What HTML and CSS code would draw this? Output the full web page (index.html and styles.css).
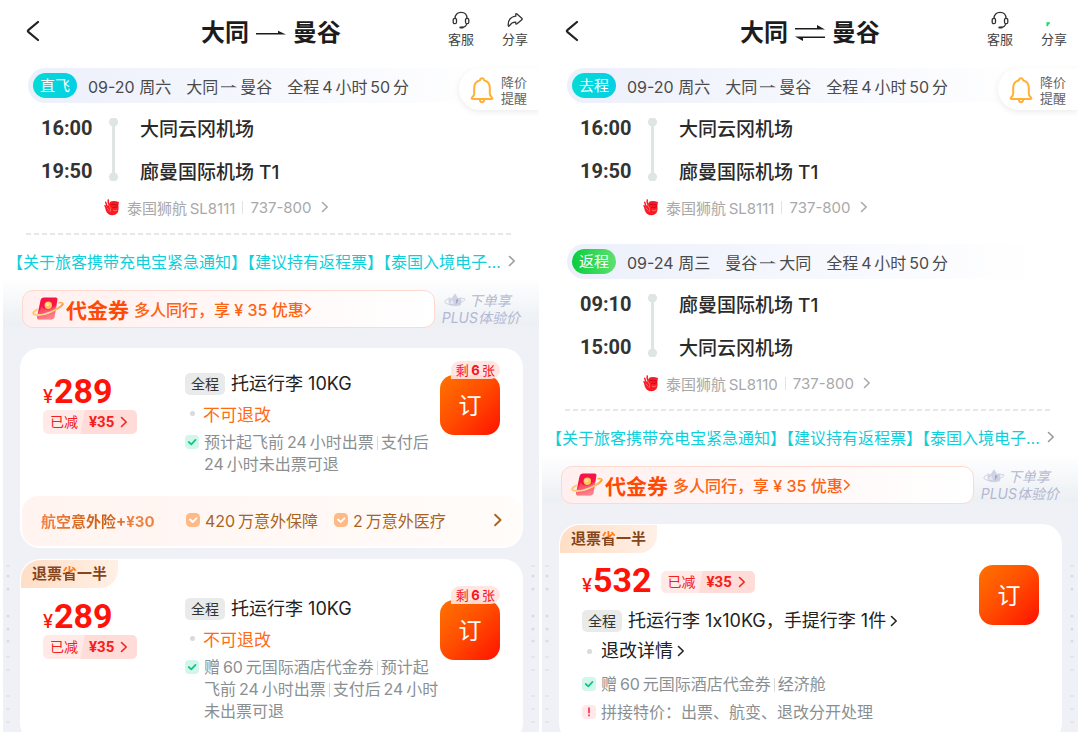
FILE: index.html
```html
<!DOCTYPE html>
<html lang="zh-CN">
<head>
<meta charset="utf-8">
<meta name="viewport" content="width=device-width, initial-scale=1">
<title>大同 — 曼谷 机票</title>
<link rel="stylesheet" href="styles.css">
</head>
<body>
<svg class="defs" width="0" height="0" aria-hidden="true">
  <defs>
    <linearGradient id="packet" x1="0" y1="0" x2="0.3" y2="1">
      <stop offset="0" stop-color="#f5124a"/><stop offset=".55" stop-color="#f51846"/><stop offset="1" stop-color="#ff8e94"/>
    </linearGradient>
    <linearGradient id="orbit" x1="0" y1="0" x2="1" y2="0">
      <stop offset="0" stop-color="#ffc46b"/><stop offset=".5" stop-color="#ffe0a8"/><stop offset="1" stop-color="#ff9d3c"/>
    </linearGradient>
    <symbol id="i-back" viewBox="0 0 14 22"><path d="M12 2 2.300 10.200Q1.500 11 2.300 11.800L12 20" fill="none" stroke="#222" stroke-width="2.200" stroke-linecap="round" stroke-linejoin="round"/></symbol>
    <symbol id="i-chev" viewBox="0 0 8 12"><path d="M1.500 1.500 6.200 6 1.500 10.500" fill="none" stroke="currentColor" stroke-width="1.600" stroke-linecap="round" stroke-linejoin="round"/></symbol>
    <symbol id="i-service" viewBox="0 0 18 18"><g fill="none" stroke="#333" stroke-width="1.300" stroke-linecap="round"><path d="M3 7.500C3 3.500 5.500 1.400 9 1.400S15 3.500 15 7.500M14.800 12.600Q13.800 16.300 9.800 16.400"/><rect x="1.200" y="7.300" width="3.300" height="5.400" rx="1.500"/><rect x="13.500" y="7.300" width="3.300" height="5.400" rx="1.500"/></g><path d="M8.300 16.400h2.400" stroke="#333" stroke-width="2" stroke-linecap="round"/></symbol>
    <symbol id="i-share" viewBox="0 0 18 18"><path d="M9.800 3.600Q9.800 2 11 3L15.800 7.200Q16.600 8 15.800 8.700L11 12.800Q9.800 13.700 9.800 12.200V11.200Q6.200 10.800 3.300 14.800Q2.300 15.900 2.200 14.200Q2 6.300 9.800 5.200Z" fill="none" stroke="#333" stroke-width="1.300" stroke-linejoin="round"/></symbol>
    <symbol id="i-bell" viewBox="0 0 24 28"><g fill="none" stroke="#ffb038" stroke-width="2" stroke-linejoin="round" stroke-linecap="round"><path d="M10 4.200Q10.200 2.200 12 2.200T14 4.200C18 5.200 19.800 8.300 19.800 12V17.500Q19.800 19.400 21.700 21.200Q23.200 23 21 23H3Q.8 23 2.300 21.200Q4.200 19.400 4.200 17.500V12C4.200 8.300 6 5.200 10 4.200Z"/><path d="M9.800 23.500Q10 26.200 12 26.200T14.200 23.500"/></g></symbol>
    <symbol id="i-lion" viewBox="0 0 16 17"><path d="M6 3Q9 1.200 15 3L14.400 6.200 14.600 10Q14.200 15.800 8.500 16.300Q3.500 16 1.800 11.500L1 8 4 7Z" fill="#fb1a22"/><g fill="none" stroke="#fb1a22" stroke-width="1.500" stroke-linecap="round"><path d="M4.200 .9Q3.600 4 5.800 7M1.700 3.200Q2 6.500 5 9M1 6.800Q2 9.500 5 11"/></g><path d="M4.600 6 6.600 9.500 6.200 13M3 8.600 5 11.500M9 11.300Q11.500 12.300 13.500 10.900" fill="none" stroke="#ffb5b5" stroke-width=".5"/><path d="M7 5.500Q10 4.700 14 6.200M8.400 8.500 13.700 7.900" fill="none" stroke="#b80712" stroke-width=".8"/></symbol>
    <symbol id="i-packet" viewBox="0 0 32 26"><path d="M26.500 6.800Q32 6 30.500 8.800Q26 14.500 13 16.800" fill="none" stroke="#ffae4d" stroke-width="1.600"/><path d="M11.500 1.500H23.500Q25.900 1.500 25.400 4L22.600 20.500Q22 23.500 19 23.500H7.500Q4.400 23.500 5.100 20.400L8.600 4Q9.200 1.500 11.500 1.500Z" fill="url(#packet)"/><path d="M9.500 10.500Q15 17.500 24.400 9.500L22.600 20.500Q22 23.500 19 23.500H7.500Q4.400 23.500 5.100 20.400Z" fill="#ff7180" opacity=".5"/><circle cx="16.300" cy="9.300" r="3.700" fill="#ffc65a"/><circle cx="15.500" cy="8.500" r="1.800" fill="#ffe4a0"/><path d="M5.500 13.300Q-.5 16.300 2 18.300Q9 20.800 22 14.500Q30 10.300 30.600 8.200" fill="none" stroke="url(#orbit)" stroke-width="1.900" stroke-linecap="round"/></symbol>
    <symbol id="i-crown" viewBox="0 0 22 16"><path d="M5 13 4.300 5.200 7.500 6.600 11 1.200 14 6 17.600 5.200 17 13Q11 15.500 5 13Z" fill="#d0d3e4"/><path d="M5.300 12.500 8 7.500 10.800 13.500Z" fill="#e6e8f2"/><path d="M12.500 7 11.700 12.800 14.500 8" fill="#9a9fbe"/><path d="M4 7Q-.5 8.700 1.500 11Q5 13.500 12.500 11.800Q21 9.500 21 7.200Q20.800 6 17.800 6.700" fill="none" stroke="#c5c8dc" stroke-width=".8"/></symbol>
    <symbol id="i-check" viewBox="0 0 14 14"><rect width="14" height="14" rx="4" fill="#d2f7ea"/><path d="M3.700 7 6.300 9.300 10.500 4.900" fill="none" stroke="#0cc489" stroke-width="1.700" stroke-linecap="round" stroke-linejoin="round"/></symbol>
    <symbol id="i-warn" viewBox="0 0 14 14"><rect width="14" height="14" rx="4" fill="#ffe8ea"/><path d="M7 3.200V7.600M7 10.200V10.600" stroke="#fb2f45" stroke-width="1.700" stroke-linecap="round"/></symbol>
    <symbol id="i-tick" viewBox="0 0 14 14"><rect width="14" height="14" rx="4.500" fill="#ffb987"/><path d="M4 6.500 6.700 9 10.400 5.300" fill="none" stroke="#fff" stroke-width="1.800" stroke-linecap="round" stroke-linejoin="round"/></symbol>
    <symbol id="i-to" viewBox="0 0 16 6"><path d="M0 4.300H16L10.800 1.800V3.200H0Z" fill="#555"/></symbol>
    <symbol id="i-marks" viewBox="0 0 4 180"><path d="M0 3h4M0 94h4M0 107h4M0 133h4M0 146h4M0 159h4M0 172h4" stroke="#d9dce2" stroke-width="1.200"/><g fill="#d9dce2"><circle cx="2" cy="13" r="1.600"/><circle cx="2" cy="26" r="1.600"/><circle cx="2" cy="53" r="1.600"/><circle cx="2" cy="66" r="1.600"/><circle cx="2" cy="78" r="1.600"/></g></symbol>
  </defs>
</svg>

<main class="screens">
  <section class="panel">
    <header class="top">
      <button class="back" aria-label="返回"><svg width="14" height="22"><use href="#i-back"/></svg></button>
      <h1 class="title">大同<svg width="30" height="8" viewBox="0 0 30 8"><path d="M0 5.600H30L22 1.800V4H0Z" fill="#1c1c1c"/></svg>曼谷</h1>
      <nav class="actions">
        <button class="action"><svg width="18" height="18"><use href="#i-service"/></svg>客服</button>
        <button class="action"><svg width="18" height="18"><use href="#i-share"/></svg>分享</button>
      </nav>
    </header>

    <article class="leg">
      <div class="band"><span class="pill">直飞</span><span>09-20 周六</span><span class="pair">大同<svg width="16" height="6"><use href="#i-to"/></svg>曼谷</span><span>全程&thinsp;4&thinsp;小时&thinsp;50&thinsp;分</span></div>
      <button class="remind"><svg width="24" height="28"><use href="#i-bell"/></svg><span>降价<br>提醒</span></button>
      <div class="stops">
        <time>16:00</time><i class="track"></i><strong>大同云冈机场</strong>
        <time>19:50</time><strong>廊曼国际机场 T1</strong>
      </div>
      <a class="plane" href="#"><svg width="16" height="17"><use href="#i-lion"/></svg><span>泰国狮航&thinsp;SL8111</span><i class="bar"></i><span>737-800</span><svg class="chev" width="8" height="12"><use href="#i-chev"/></svg></a>
    </article>
    <hr class="dash">
    <a class="notice" href="#"><span>【关于旅客携带充电宝紧急通知】【建议持有返程票】【泰国入境电子…</span><svg width="8" height="12"><use href="#i-chev"/></svg></a>

    <div class="offers">
      <div class="promo">
        <a class="coupon" href="#"><svg width="32" height="26"><use href="#i-packet"/></svg><b>代金券</b><span>多人同行，享 ¥ 35 优惠</span><svg width="8" height="12"><use href="#i-chev"/></svg></a>
        <a class="plus" href="#"><svg width="22" height="16"><use href="#i-crown"/></svg>下单享<br>PLUS体验价</a>
      </div>

      <article class="card">
        <div class="fare">
          <div class="price">
            <p class="amount"><small>¥</small>289</p>
            <button class="cut"><span>已减</span><b>¥35<svg width="8" height="12"><use href="#i-chev"/></svg></b></button>
          </div>
          <ul class="terms">
            <li class="lead"><span class="tag">全程</span>托运行李 10KG</li>
            <li class="strict"><i class="dot"></i>不可退改</li>
            <li class="fine"><svg width="14" height="14"><use href="#i-check"/></svg><span>预计起飞前&thinsp;24&thinsp;小时出票<i class="sep"></i>支付后<br>24&thinsp;小时未出票可退</span></li>
          </ul>
          <div class="buy"><button class="book">订</button><span class="left">剩&thinsp;<b>6</b>&thinsp;张</span></div>
        </div>
        <a class="insure" href="#"><strong>航空意外险+¥30</strong><span><svg width="14" height="14"><use href="#i-tick"/></svg>420&thinsp;万意外保障</span><span><svg width="14" height="14"><use href="#i-tick"/></svg>2&thinsp;万意外医疗</span><svg class="end" width="10" height="14"><use href="#i-chev"/></svg></a>
      </article>

      <article class="card">
        <h2 class="ribbon">退票<em>省</em>一半</h2>
        <div class="fare ribboned">
          <div class="price">
            <p class="amount"><small>¥</small>289</p>
            <button class="cut"><span>已减</span><b>¥35<svg width="8" height="12"><use href="#i-chev"/></svg></b></button>
          </div>
          <ul class="terms">
            <li class="lead"><span class="tag">全程</span>托运行李 10KG</li>
            <li class="strict"><i class="dot"></i>不可退改</li>
            <li class="fine"><svg width="14" height="14"><use href="#i-check"/></svg><span>赠&thinsp;60&thinsp;元国际酒店代金券<i class="sep"></i>预计起<br>飞前&thinsp;24&thinsp;小时出票<i class="sep"></i>支付后&thinsp;24&thinsp;小时<br>未出票可退</span></li>
          </ul>
          <div class="buy"><button class="book">订</button><span class="left">剩&thinsp;<b>6</b>&thinsp;张</span></div>
        </div>
      </article>
      <svg class="marks start" width="4" height="180"><use href="#i-marks"/></svg>
      <svg class="marks finish" width="4" height="180"><use href="#i-marks"/></svg>
    </div>
  </section>

  <section class="panel">
    <header class="top">
      <button class="back" aria-label="返回"><svg width="14" height="22"><use href="#i-back"/></svg></button>
      <h1 class="title">大同<svg width="30" height="18" viewBox="0 0 30 18"><path d="M0 5.600H30L22 1V4H0ZM30 12.400H0L8 17V14H30Z" fill="#1c1c1c"/></svg>曼谷</h1>
      <nav class="actions">
        <button class="action"><svg width="18" height="18"><use href="#i-service"/></svg>客服</button>
        <button class="action"><svg width="18" height="18" viewBox="0 0 18 18"><path d="M1.500 11.200H5.200L4.600 12.800Q3.400 13.200 2.900 15.200H1.500Z" fill="#12dc6c"/></svg>分享</button>
      </nav>
    </header>

    <article class="leg">
      <div class="band"><span class="pill">去程</span><span>09-20 周六</span><span class="pair">大同<svg width="16" height="6"><use href="#i-to"/></svg>曼谷</span><span>全程&thinsp;4&thinsp;小时&thinsp;50&thinsp;分</span></div>
      <button class="remind"><svg width="24" height="28"><use href="#i-bell"/></svg><span>降价<br>提醒</span></button>
      <div class="stops">
        <time>16:00</time><i class="track"></i><strong>大同云冈机场</strong>
        <time>19:50</time><strong>廊曼国际机场 T1</strong>
      </div>
      <a class="plane" href="#"><svg width="16" height="17"><use href="#i-lion"/></svg><span>泰国狮航&thinsp;SL8111</span><i class="bar"></i><span>737-800</span><svg class="chev" width="8" height="12"><use href="#i-chev"/></svg></a>
    </article>
    <article class="leg back-leg">
      <div class="band"><span class="pill green">返程</span><span>09-24 周三</span><span class="pair">曼谷<svg width="16" height="6"><use href="#i-to"/></svg>大同</span><span>全程&thinsp;4&thinsp;小时&thinsp;50&thinsp;分</span></div>
      <div class="stops">
        <time>09:10</time><i class="track"></i><strong>廊曼国际机场 T1</strong>
        <time>15:00</time><strong>大同云冈机场</strong>
      </div>
      <a class="plane" href="#"><svg width="16" height="17"><use href="#i-lion"/></svg><span>泰国狮航&thinsp;SL8110</span><i class="bar"></i><span>737-800</span><svg class="chev" width="8" height="12"><use href="#i-chev"/></svg></a>
    </article>
    <hr class="dash">
    <a class="notice" href="#"><span>【关于旅客携带充电宝紧急通知】【建议持有返程票】【泰国入境电子…</span><svg width="8" height="12"><use href="#i-chev"/></svg></a>

    <div class="offers">
      <div class="promo">
        <a class="coupon" href="#"><svg width="32" height="26"><use href="#i-packet"/></svg><b>代金券</b><span>多人同行，享 ¥ 35 优惠</span><svg width="8" height="12"><use href="#i-chev"/></svg></a>
        <a class="plus" href="#"><svg width="22" height="16"><use href="#i-crown"/></svg>下单享<br>PLUS体验价</a>
      </div>

      <article class="card">
        <h2 class="ribbon">退票<em>省</em>一半</h2>
        <div class="fare wide">
          <div class="summary">
            <div class="price inline">
              <p class="amount"><small>¥</small>532</p>
              <button class="cut"><span>已减</span><b>¥35<svg width="8" height="12"><use href="#i-chev"/></svg></b></button>
            </div>
            <ul class="terms roomy">
              <li class="lead"><span class="tag">全程</span>托运行李 1x10KG，手提行李 1件<svg width="8" height="12"><use href="#i-chev"/></svg></li>
              <li class="lead"><i class="dot"></i>退改详情<svg width="8" height="12"><use href="#i-chev"/></svg></li>
              <li class="fine"><svg width="14" height="14"><use href="#i-check"/></svg><span>赠&thinsp;60&thinsp;元国际酒店代金券<i class="sep"></i>经济舱</span></li>
              <li class="fine"><svg width="14" height="14"><use href="#i-warn"/></svg><span>拼接特价：出票、航变、退改分开处理</span></li>
            </ul>
          </div>
          <div class="buy"><button class="book">订</button></div>
        </div>
      </article>
      <svg class="marks start" width="4" height="180"><use href="#i-marks"/></svg>
      <svg class="marks finish" width="4" height="180"><use href="#i-marks"/></svg>
    </div>
  </section>
</main>
</body>
</html>
```
FILE: styles.css
```css
* { box-sizing: border-box; }

body {
  margin: 0;
  background: #fff;
  color: #222;
  font-family: Inter, "Noto Sans CJK SC", sans-serif;
  font-size: 16px;
}

h1, h2, p, ul { margin: 0; padding: 0; }
ul { list-style: none; }
a { color: inherit; text-decoration: none; }
button { margin: 0; padding: 0; border: 0; background: none; color: inherit; font: inherit; }
svg { display: block; flex: none; }
.defs { position: absolute; }

.screens {
  display: grid;
  grid-template-columns: 1fr 1fr;
  gap: 3px;
  height: 100vh;
  padding: 0 2px 0 3px;
  overflow: hidden;
}
.panel { display: flex; flex-direction: column; min-width: 0; min-height: 0; }

/* header */
.top {
  display: grid;
  flex: none;
  grid-template-columns: 1fr auto 1fr;
  align-items: center;
  height: 68px;
  padding: 0 11px 2px;
}
.back { justify-self: start; padding: 0 0 4px 12px; }
.title { display: flex; align-items: center; gap: 7px; font-size: 24px; line-height: 32px; font-weight: 700; color: #1c1c1c; }
.actions { display: flex; justify-content: flex-end; gap: 28px; padding-bottom: 6px; }
.action { display: flex; flex-direction: column; align-items: center; font-size: 13px; line-height: 20px; color: #444; }

/* flight legs */
.leg { position: relative; flex: none; }
.back-leg { margin-top: 22px; }
.band {
  display: flex;
  align-items: center;
  gap: 15px;
  height: 35px;
  margin: 0 40px 0 25px;
  padding-left: 5px;
  border-radius: 18px;
  background: linear-gradient(90deg, #ecf0fb, #f8f9fe 60%, #fff);
  font-size: 16px;
  color: #4a4a4a;
  white-space: nowrap;
}
.pill {
  width: 44px;
  margin-right: -4px;
  border-radius: 13px;
  background: linear-gradient(90deg, #04dbd6, #04cfe6);
  color: #fff;
  font-size: 15px;
  line-height: 25px;
  text-align: center;
}
.pill.green { background: linear-gradient(90deg, #08ce3c, #5fe070); }
.pair { display: flex; align-items: center; gap: 3px; }
.remind {
  position: absolute;
  top: 0;
  right: 0;
  display: flex;
  align-items: center;
  gap: 7px;
  height: 42px;
  padding: 2px 12px 0 11px;
  border-radius: 21px 0 0 21px;
  background: #fff;
  box-shadow: 0 2px 6px rgba(0, 0, 0, .08);
  clip-path: inset(-8px 0 -12px -12px);
  color: #666;
  font-size: 13px;
  line-height: 16px;
}
.stops {
  display: grid;
  grid-template-columns: 65px 18px 1fr;
  grid-template-rows: 43px 43px;
  align-items: center;
  margin-top: 3px;
  padding-left: 38px;
  column-gap: 8px;
}
.stops time { font: 700 20px Roboto, sans-serif; color: #333; }
.stops strong { font-size: 19px; font-weight: 500; color: #2a2a2a; grid-column: 3; }
.track {
  grid-column: 2;
  grid-row: 1 / 3;
  width: 9px;
  height: 63px;
  margin-left: -5px;
  background:
    radial-gradient(circle at 50% 4px, #dfe5e5 4px, transparent 5px),
    radial-gradient(circle at 50% 59px, #dfe5e5 4px, transparent 5px),
    linear-gradient(#dfe5e5, #dfe5e5) center / 3px 55px no-repeat;
}
.plane { display: flex; align-items: center; gap: 7px; height: 30px; padding-left: 101px; font-size: 15px; color: #a9a9a9; }
.bar { width: 1px; height: 13px; background: #e3e3e3; }
.plane .chev { margin-left: 2px; }

.dash {
  flex: none;
  height: 2px;
  margin: 11px 26px 0 23px;
  border: 0;
  background: repeating-linear-gradient(90deg, #e8e8e8 0 5px, transparent 5px 8px);
}
.notice {
  display: flex;
  flex: none;
  align-items: center;
  justify-content: space-between;
  height: 26px;
  margin-top: 13px;
  padding: 0 23px 0 4px;
  color: #0fcfdb;
  white-space: nowrap;
}
.notice svg { color: #999; }

/* offers */
.offers {
  position: relative;
  display: flex;
  flex: 1;
  flex-direction: column;
  gap: 11px;
  margin-top: 4px;
  padding: 12px 16px 0 17px;
  background: linear-gradient(#fff, #ecf0f4 46px, #f0f1f6 54px);
}
.promo { display: flex; gap: 7px; margin: 0 3px 9px 2px; }
.coupon {
  display: flex;
  flex: 1;
  align-items: center;
  height: 38px;
  padding-left: 9px;
  border: 1px solid #ffd9cd;
  border-radius: 11px;
  background: linear-gradient(90deg, #fff0ef, #fff8f7 55%, #fff);
  color: #fd6212;
  font-weight: 500;
  white-space: nowrap;
}
.coupon b { margin: 0 5px 0 2px; font-size: 21px; color: #ff4a06; }
.plus { padding-top: 2px; font-size: 14px; line-height: 17px; font-style: italic; color: #b3b7d2; white-space: nowrap; }
.plus svg { display: inline-block; margin: 0 3px 0 2px; vertical-align: -2px; }

.card { flex: none; border-radius: 20px; background: #fff; }
.ribbon {
  width: 97px;
  margin: 0 0 0 1px;
  padding-left: 11px;
  border-top: 1px solid #fff;
  border-radius: 20px 0 18px 0;
  background: linear-gradient(90deg, #ffdec6, #fff0e5);
  color: #86451a;
  font-size: 15px;
  font-weight: 700;
  line-height: 28px;
}
.ribbon em {
  font-style: normal;
  background: linear-gradient(170deg, #ff7a16 42%, #86451a 43%);
  background-clip: text;
  color: transparent;
}
.fare { display: grid; grid-template-columns: 142px 1fr 60px; padding: 25px 23px 21px; }
.fare.ribboned { padding-top: 10px; }
.fare.wide { grid-template-columns: 1fr 60px; padding-top: 9px; }
.amount {
  display: flex;
  align-items: baseline;
  gap: 1px;
  height: 37px;
  color: #ff1208;
  font: 700 34px/36px Roboto, sans-serif;
}
.amount small { font: 500 18px Inter, sans-serif; }
.cut {
  display: flex;
  align-items: center;
  width: 94px;
  border-radius: 5px;
  background: linear-gradient(100deg, #ffeae7 42%, #ffdcd7 43%);
  color: #f5201c;
  font-size: 14px;
  line-height: 24px;
  padding-left: 7px;
}
.cut b { display: flex; align-items: center; gap: 6px; margin-left: 11px; font: 700 15px/20px Roboto, sans-serif; }
.inline { display: flex; align-items: center; gap: 9px; }
.inline .cut { margin-top: 3px; line-height: 22px; }

.terms { white-space: nowrap; }
.terms li { display: flex; }
.lead { align-items: center; gap: 6px; height: 22px; font-size: 18px; line-height: 20px; }
.lead svg { margin-left: -2px; }
.tag { width: 40px; border-radius: 5px; background: #e8ebea; font-size: 14px; line-height: 22px; text-align: center; color: #333; }
.strict { align-items: center; height: 36px; font-size: 17px; color: #ff6a14; }
.dot { width: 5px; height: 5px; margin: 0 8px 0 5px; border-radius: 50%; background: #d9dbdb; }
.lead .dot { margin-right: 3px; }
.fine { gap: 5px; color: #8a9092; line-height: 22px; }
.fine > svg { margin-top: 4px; }
.sep { display: inline-block; width: 1px; height: 14px; margin: 0 3px; background: #d8dcdc; vertical-align: -2px; }
.roomy { display: grid; gap: 8px; margin-top: 11px; }
.roomy .fine { line-height: 20px; }
.roomy .fine > svg { margin-top: 3px; }
.roomy .lead + .fine { margin-top: 4px; }

.buy { position: relative; padding-top: 2px; }
.wide .buy { padding-top: 3px; }
.book {
  width: 60px;
  height: 60px;
  padding-bottom: 3px;
  border-radius: 14px;
  background: linear-gradient(135deg, #ff7300, #ff5000 45%, #ff1200);
  color: #fff;
  font-size: 23px;
}
.left {
  position: absolute;
  top: -12px;
  right: 0;
  padding: 0 5px;
  border-radius: 9px 9px 9px 0;
  background: rgba(255, 228, 225, .92);
  color: #f5141c;
  font-size: 13px;
  line-height: 18px;
  white-space: nowrap;
}

.insure {
  display: flex;
  align-items: center;
  gap: 16px;
  height: 50px;
  margin: 0 2px;
  padding: 0 18px 2px 19px;
  border-radius: 16px;
  background: linear-gradient(90deg, #fff4f0, #fffcfa);
  color: #a8641f;
  white-space: nowrap;
}
.card:has(.insure) { padding-bottom: 2px; }
.insure strong {
  width: 129px;
  background: linear-gradient(90deg, #f58242, #c75d14 50%, #f08040 70%);
  background-clip: text;
  color: transparent;
  font-size: 15px;
  font-weight: 700;
}
.insure span { display: flex; align-items: center; gap: 5px; }
.insure .end { margin-left: auto; }

.marks { position: absolute; bottom: 0; }
.start { left: 3px; }
.finish { right: 4px; }
```
